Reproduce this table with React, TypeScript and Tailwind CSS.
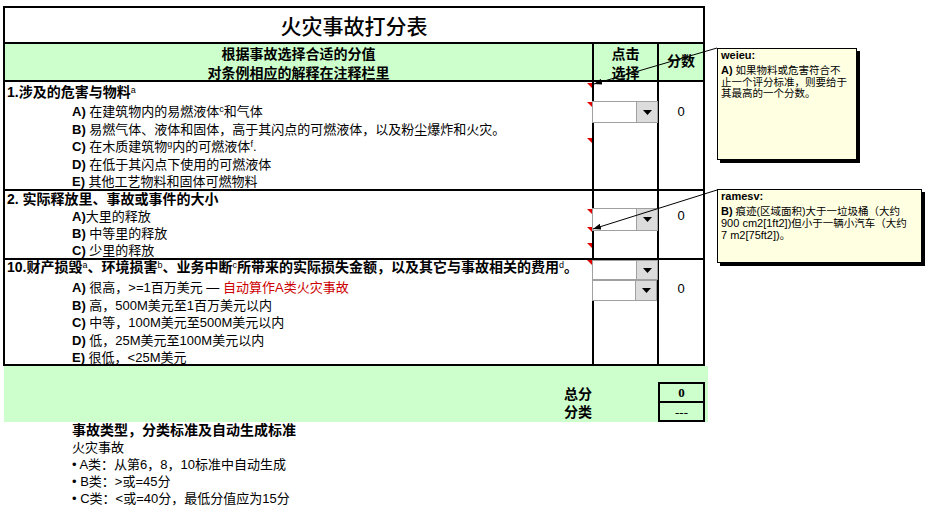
import React from "react";

function Tri({ className }: { className: string }) {
  return (
    <svg className={`absolute right-0 ${className}`} width="5" height="5" viewBox="0 0 5 5">
      <polygon points="0,0 5,0 5,5" fill="#e00000" />
    </svg>
  );
}

function Dropdown({ className }: { className: string }) {
  return (
    <div className={`absolute z-10 flex border border-[#a0a0a0] bg-white ${className}`}>
      <div className="flex-1" />
      <div className="w-[21px] h-full bg-[#dcdcdc] border-l border-[#a0a0a0] flex items-center justify-center">
        <svg width="9" height="5" viewBox="0 0 9 5">
          <polygon points="0,0 9,0 4.5,5" fill="#000" />
        </svg>
      </div>
    </div>
  );
}

function Item({ label, lh, children }: { label: string; lh: string; children: React.ReactNode }) {
  return (
    <div className={`pl-[67px] text-[13px] whitespace-nowrap ${lh}`}>
      <span className="font-bold">{label}</span>
      {children}
    </div>
  );
}

function Sup({ children }: { children: React.ReactNode }) {
  return <sup className="text-[9px] font-normal">{children}</sup>;
}

export default function App() {
  return (
    <div className="relative w-[930px] h-[508px] bg-white text-black overflow-hidden font-['Liberation_Sans','Noto_Sans_CJK_SC',sans-serif]">
      <div className="pt-[6px] pl-[3px]">
        <div className="w-[702px] border-2 border-black">
          {/* title */}
          <div className="h-[36px] border-b-2 border-black flex items-center justify-center pt-[3px] text-[21px] font-medium">
            火灾事故打分表
          </div>
          {/* header */}
          <div className="h-[38px] border-b-2 border-black flex bg-[#ccffcc] text-[14px] font-bold">
            <div className="flex-1 flex flex-col items-center pt-[1px]">
              <div className="h-[19px] leading-[19px]">根据事故选择合适的分值</div>
              <div className="h-[19px] leading-[19px]">对条例相应的解释在注释栏里</div>
            </div>
            <div className="w-[65px] border-l-2 border-black flex flex-col items-center pt-[1px]">
              <div className="h-[19px] leading-[19px]">点击</div>
              <div className="h-[19px] leading-[19px]">选择</div>
            </div>
            <div className="w-[46px] border-l-2 border-black flex justify-center pt-[8px] leading-[19px]">分数</div>
          </div>
          {/* section 1 */}
          <div className="relative h-[109px] border-b-2 border-black flex">
            <div className="relative flex-1">
              <div className="h-[20px] leading-[20px] pl-[2px] text-[14px] font-bold">
                1.涉及的危害与物料<Sup>a</Sup>
              </div>
              <div className="mt-[1px]">
                <Item label="A)" lh="h-[17.5px] leading-[17.5px]"> 在建筑物内的易燃液体<Sup>c</Sup>和气体</Item>
                <Item label="B)" lh="h-[17.5px] leading-[17.5px]"> 易燃气体、液体和固体，高于其闪点的可燃液体，以及粉尘爆炸和火灾。</Item>
                <Item label="C)" lh="h-[17.5px] leading-[17.5px]"> 在木质建筑物<Sup>g</Sup>内的可燃液体<Sup>f</Sup>.</Item>
                <Item label="D)" lh="h-[17.5px] leading-[17.5px]"> 在低于其闪点下使用的可燃液体</Item>
                <Item label="E)" lh="h-[17.5px] leading-[17.5px]"> 其他工艺物料和固体可燃物料</Item>
              </div>
              <Tri className="top-[1px]" />
              <Tri className="top-[20px]" />
              <Tri className="top-[56px]" />
            </div>
            <div className="w-[65px] border-l-2 border-black" />
            <div className="w-[46px] border-l-2 border-black text-center text-[13px] pt-[21px] leading-[17px]">0</div>
            <Dropdown className="left-[587px] top-[19px] w-[66px] h-[22px]" />
          </div>
          {/* section 2 */}
          <div className="relative h-[69px] border-b-2 border-black flex">
            <div className="relative flex-1">
              <div className="h-[17px] leading-[17px] pl-[2px] text-[14px] font-bold">2. 实际释放里、事故或事件的大小</div>
              <Item label="A)" lh="h-[17px] leading-[17px]">大里的释放</Item>
              <Item label="B)" lh="h-[17px] leading-[17px]"> 中等里的释放</Item>
              <Item label="C)" lh="h-[17px] leading-[17px]"> 少里的释放</Item>
              <Tri className="top-[18px]" />
              <Tri className="top-[36px]" />
              <Tri className="top-[52px]" />
            </div>
            <div className="w-[65px] border-l-2 border-black" />
            <div className="w-[46px] border-l-2 border-black text-center text-[13px] pt-[16px] leading-[17px]">0</div>
            <Dropdown className="left-[587px] top-[17px] w-[66px] h-[23px]" />
          </div>
          {/* section 10 */}
          <div className="relative h-[104px] flex">
            <div className="relative flex-1">
              <div className="h-[15px] leading-[15px] pl-[2px] text-[14px] font-bold whitespace-nowrap">
                10.财产损毁<Sup>a</Sup>、环境损害<Sup>b</Sup>、业务中断<Sup>c</Sup>所带来的实际损失金额，以及其它与事故相关的费用<Sup>d</Sup>。
              </div>
              <div className="mt-[4px]">
                <Item label="A)" lh="h-[17.5px] leading-[17.5px]">
                  {" "}很高，&gt;=1百万美元 — <span className="text-[#cc0000]">自动算作A类火灾事故</span>
                </Item>
                <Item label="B)" lh="h-[17.5px] leading-[17.5px]"> 高，500M美元至1百万美元以内</Item>
                <Item label="C)" lh="h-[17.5px] leading-[17.5px]"> 中等，100M美元至500M美元以内</Item>
                <Item label="D)" lh="h-[17.5px] leading-[17.5px]"> 低，25M美元至100M美元以内</Item>
                <Item label="E)" lh="h-[17.5px] leading-[17.5px]"> 很低，&lt;25M美元</Item>
              </div>
              <Tri className="top-[0px]" />
            </div>
            <div className="w-[65px] border-l-2 border-black" />
            <div className="w-[46px] border-l-2 border-black text-center text-[13px] pt-[20px] leading-[17px]">0</div>
            <Dropdown className="left-[587px] top-[0px] w-[66px] h-[20px]" />
            <Dropdown className="left-[587px] top-[20px] w-[65px] h-[21px]" />
          </div>
        </div>
      </div>

      {/* footer green */}
      <div className="ml-[4px] w-[704px] h-[56px] bg-[#ccffcc] pt-[16px]">
        <div className="flex">
          <div className="w-[588px] text-right text-[14px] font-bold pt-[3px]">
            <div className="h-[18px] leading-[18px]">总分</div>
            <div className="h-[18px] leading-[18px]">分类</div>
          </div>
          <div className="ml-[66px] w-[47px] h-[40px] border-2 border-black flex flex-col font-['Liberation_Serif',serif] text-[13px]">
            <div className="h-[19px] border-b-2 border-black flex items-center justify-center font-bold">0</div>
            <div className="flex-1 flex items-center justify-center">---</div>
          </div>
        </div>
      </div>

      {/* bottom notes */}
      <div className="pl-[72px]">
        <div className="h-[17px] leading-[17px] text-[14px] font-bold">事故类型，分类标准及自动生成标准</div>
        <div className="h-[17px] leading-[17px] text-[13px]">火灾事故</div>
        <div className="h-[17px] leading-[17px] text-[13px]">• A类：从第6，8，10标准中自动生成</div>
        <div className="h-[17px] leading-[17px] text-[13px]">• B类：&gt;或=45分</div>
        <div className="h-[17px] leading-[17px] text-[13px]">• C类：&lt;或=40分，最低分值应为15分</div>
      </div>

      {/* comment connectors */}
      <svg className="absolute left-0 top-0 pointer-events-none z-20" width="930" height="508">
        <defs>
          <marker id="ah" markerWidth="8" markerHeight="6" refX="8" refY="3" orient="auto" markerUnits="userSpaceOnUse">
            <path d="M0,0 L8,3 L0,6 z" fill="#000" />
          </marker>
        </defs>
        <line x1="717" y1="48" x2="594" y2="84" stroke="#000" strokeWidth="1" markerEnd="url(#ah)" />
        <line x1="717" y1="190" x2="593" y2="229" stroke="#000" strokeWidth="1" markerEnd="url(#ah)" />
      </svg>

      {/* comment 1 */}
      <div className="absolute z-30 left-[717px] top-[48px] w-[140px] h-[112px] bg-[#ffffe1] border border-black shadow-[3px_3px_0_#000] pl-[3px] text-[10.5px] whitespace-nowrap">
        <div className="h-[13px] leading-[13px] text-[11px] font-bold">weieu:</div>
        <div className="mt-[3px] leading-[11.5px]">
          <div><span className="font-bold text-[11px]">A)</span> 如果物料或危害符合不</div>
          <div>止一个评分标准，则要给于</div>
          <div>其最高的一个分数。</div>
        </div>
      </div>

      {/* comment 2 */}
      <div className="absolute z-30 left-[717px] top-[189px] w-[205px] h-[74px] bg-[#ffffe1] border border-black shadow-[3px_3px_0_#000] pl-[3px] text-[10.5px] whitespace-nowrap">
        <div className="h-[13px] leading-[13px] text-[11px] font-bold">ramesv:</div>
        <div className="mt-[2px] leading-[12px]">
          <div><span className="font-bold text-[11px]">B)</span> 痕迹(区域面积)大于一垃圾桶（大约</div>
          <div><span className="text-[11px]">900 cm2[1ft2])</span>但小于一辆小汽车（大约</div>
          <div><span className="text-[11px]">7 m2[75ft2])</span>。</div>
        </div>
      </div>
    </div>
  );
}
